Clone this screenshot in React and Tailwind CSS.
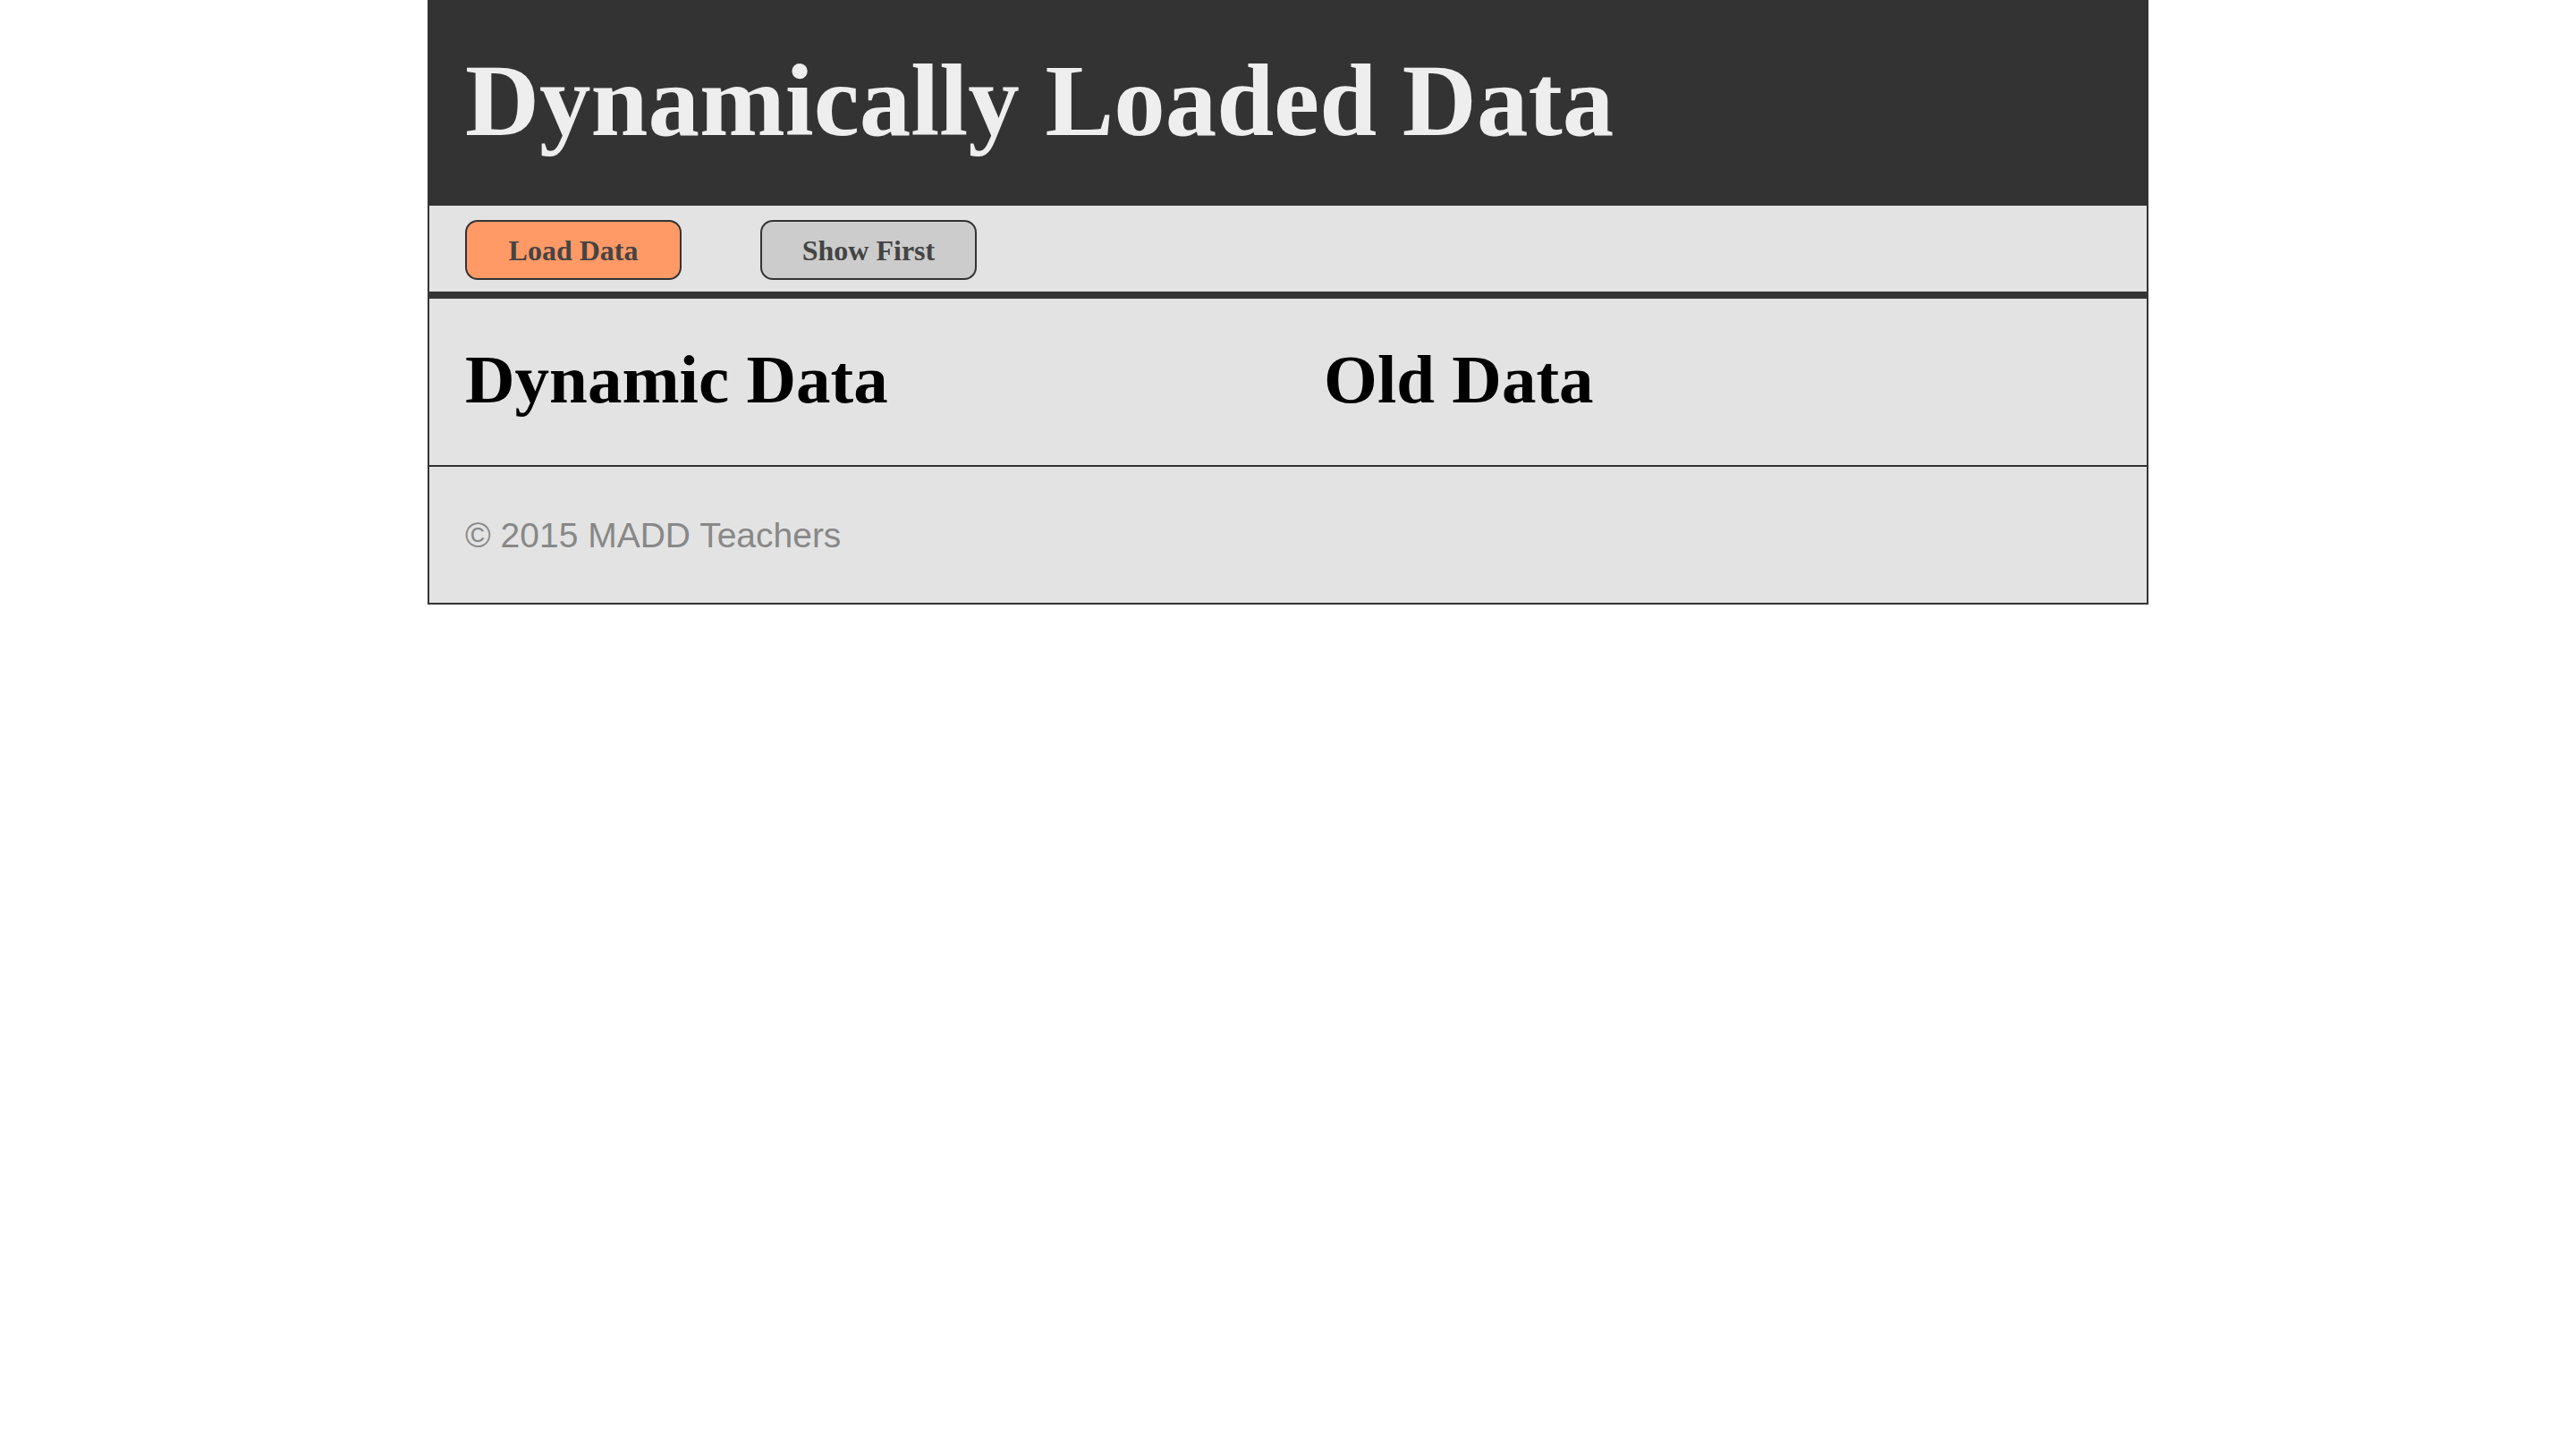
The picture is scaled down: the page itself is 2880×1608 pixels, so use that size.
const serif = { fontFamily: '"Liberation Serif", "Times New Roman", serif' };

const Button = ({ label, className }) => (
  <button
    className={`w-[242px] h-[67px] flex items-center justify-center rounded-[14px] border-2 border-[#333] text-[32px] leading-none font-bold text-[#444] ${className}`}
    style={serif}
  >
    {label}
  </button>
);

const App = () => {
  return (
    <div className="min-h-screen bg-white">
      <div className="w-[1924px] mx-auto border-x-2 border-b-2 border-[#333] bg-[#e3e3e3]">
        {/* HEADER */}
        <header className="h-[230px] bg-[#333] pt-[55px] px-[40px]">
          <h1
            className="text-[115px] leading-none font-bold text-[#eeeeee]"
            style={serif}
          >
            Dynamically Loaded Data
          </h1>
        </header>

        {/* TOOLBAR */}
        <div className="h-[104px] pt-[16px] px-[40px] border-b-8 border-[#333] flex items-start gap-[88px]">
          <Button label="Load Data" className="bg-[#ff9966]" />
          <Button label="Show First" className="bg-[#cccccc]" />
        </div>

        {/* DATA */}
        <div className="h-[188px] border-b-2 border-[#333] flex">
          <div className="w-1/2 px-[40px] pt-[52px]">
            <h2 className="text-[77px] leading-none font-bold text-black" style={serif}>
              Dynamic Data
            </h2>
          </div>
          <div className="w-1/2 px-[40px] pt-[52px]">
            <h2 className="text-[77px] leading-none font-bold text-black" style={serif}>
              Old Data
            </h2>
          </div>
        </div>

        {/* FOOTER */}
        <footer className="h-[152px] px-[40px] pt-[57px]">
          <p
            className="text-[39px] leading-none text-[#888]"
            style={{ fontFamily: '"Liberation Sans", Arial, sans-serif' }}
          >
            © 2015 MADD Teachers
          </p>
        </footer>
      </div>
    </div>
  );
};

export default App;
